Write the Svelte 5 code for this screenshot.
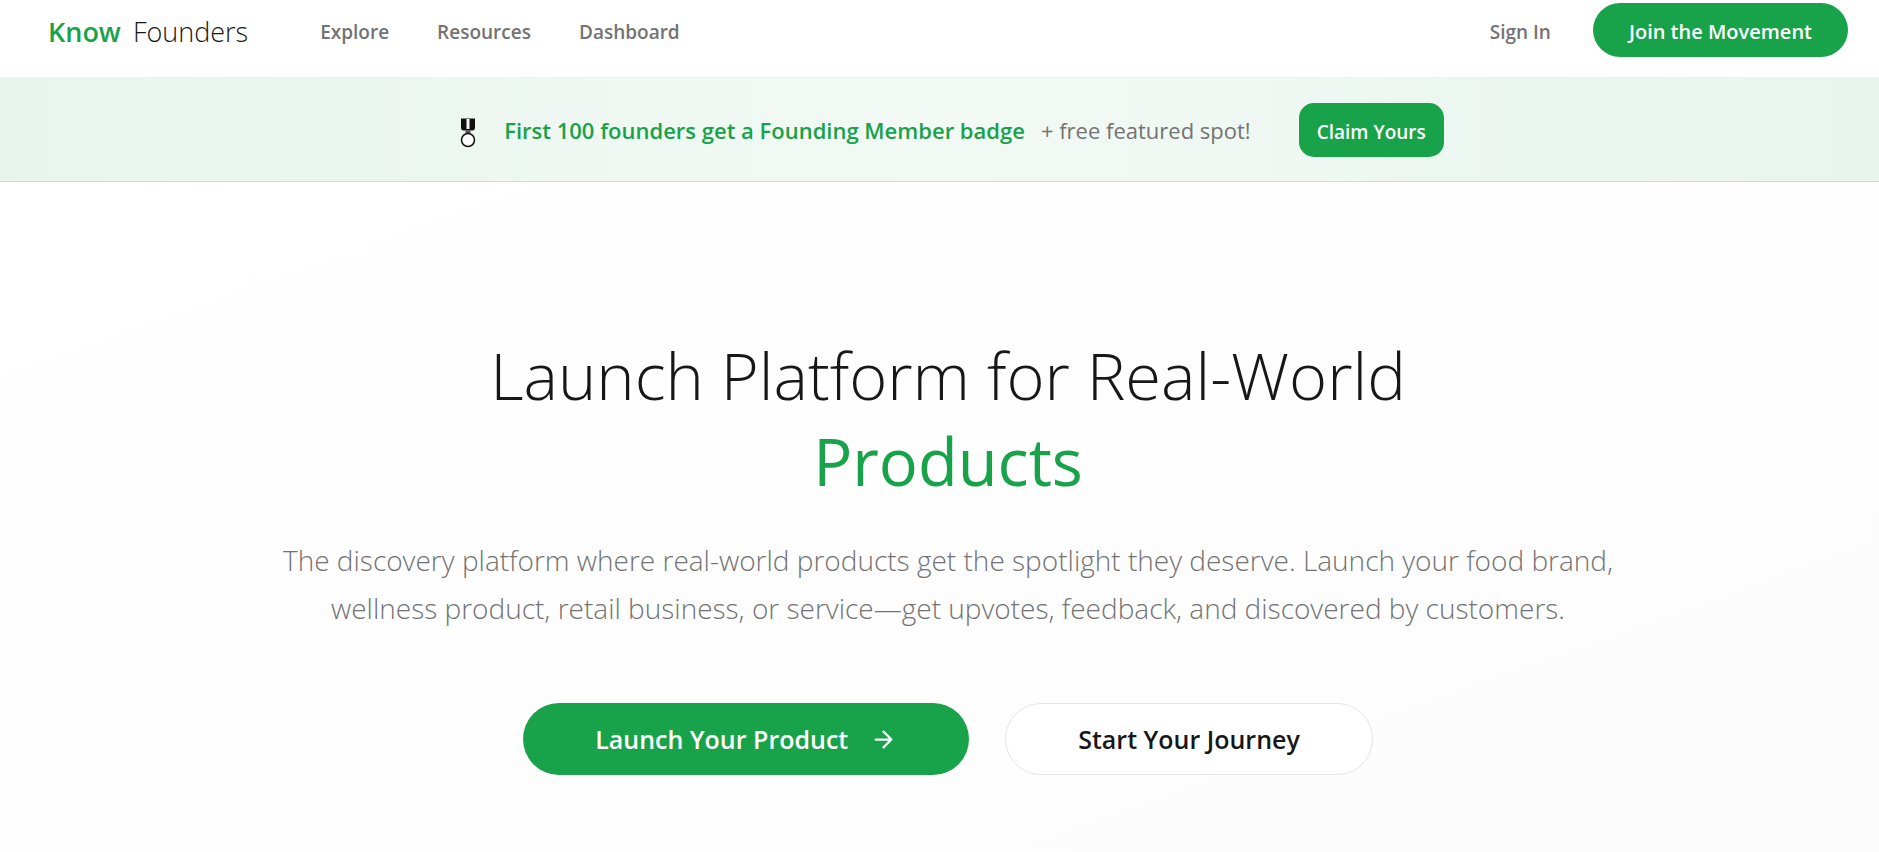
<script lang="ts">
  const links = [
    { label: 'Explore', href: '#explore' },
    { label: 'Resources', href: '#resources' },
    { label: 'Dashboard', href: '#dashboard' },
  ];
</script>

<div class="page">
  <header>
    <a class="logo" href="#home"><strong>Know</strong><span>Founders</span></a>
    <nav>
      {#each links as link}
        <a href={link.href}>{link.label}</a>
      {/each}
    </nav>
    <div class="account">
      <a href="#signin">Sign In</a>
      <button class="join">Join the Movement</button>
    </div>
  </header>

  <section class="banner">
    <svg class="medal" viewBox="0 -6 16 36" aria-hidden="true">
      <path d="M1 0.5h14v9.5q0 2-2 2.500H3q-2-0.500-2-2.500z" fill="#111" />
      <path d="M6.500 1h3v10h-3z" fill="#f3f9f5" />
      <path d="M5.500 12.500h5v2.500h-5z" fill="#555" />
      <circle cx="8" cy="22" r="6.500" fill="#fbfdfc" stroke="#111" stroke-width="1.500" />
    </svg>
    <p><strong>First 100 founders get a Founding Member badge</strong><span>+ free featured spot!</span></p>
    <button class="claim">Claim Yours</button>
  </section>

  <main>
    <h1>Launch Platform for Real-World<br /><em>Products</em></h1>
    <p class="lead">
      The discovery platform where real-world products get the spotlight they deserve. Launch your food brand,
      wellness product, retail business, or service—get upvotes, feedback, and discovered by customers.
    </p>
    <div class="actions">
      <button class="primary">
        Launch Your Product
        <svg viewBox="0 0 24 24" aria-hidden="true">
          <path d="M5 12h14M12 5l7 7-7 7" />
        </svg>
      </button>
      <button class="secondary">Start Your Journey</button>
    </div>
  </main>
</div>

<style>
  :global(body) {
    margin: 0;
    background: #fefefe;
  }

  .page {
    --green: #18a249;
    --ink: #171717;
    --grey: #737373;
    min-height: 100vh;
    display: flex;
    flex-direction: column;
    font-family: "Open Sans", "Noto Sans", sans-serif;
    color: var(--ink);
  }

  a {
    color: inherit;
    text-decoration: none;
  }

  button {
    box-sizing: border-box;
    font: inherit;
    font-weight: 600;
    border: 0;
    padding: 0;
    cursor: pointer;
    color: #fff;
    background: var(--green);
    white-space: nowrap;
  }

  header {
    display: flex;
    align-items: center;
    padding: 3px 31px 20px 48px;
    border-bottom: 1px solid #f0f2f1;
    background: #fff;
    font-size: 19px;
    font-weight: 600;
    color: var(--grey);
  }

  header a {
    padding-top: 3px;
  }

  .logo {
    display: flex;
    gap: 12px;
    font-size: 27px;
    line-height: 36px;
    font-weight: 300;
    color: var(--ink);
  }

  .logo strong {
    font-weight: 600;
    color: var(--green);
  }

  nav {
    display: flex;
    gap: 48px;
    margin-left: 72px;
  }

  .account {
    display: flex;
    align-items: center;
    gap: 42px;
    margin-left: auto;
  }

  .join {
    height: 54px;
    padding: 3px 36px 0;
    border-radius: 27px;
    font-size: 20px;
  }

  .banner {
    display: flex;
    align-items: center;
    justify-content: center;
    padding: 25px 31px 24px 56px;
    border-bottom: 1px solid #c5e3d0;
    background: linear-gradient(to right, #e7f5ec, #f3f9f5 50%, #e7f5ec);
  }

  .banner p {
    display: flex;
    gap: 16px;
    margin: 0 48px 0 28px;
    font-size: 22px;
    line-height: 36px;
    color: var(--grey);
  }

  .banner strong {
    font-weight: 600;
    color: var(--green);
  }

  .medal {
    width: 16px;
    height: 36px;
  }

  .claim {
    height: 54px;
    padding: 3px 18px 0;
    border-radius: 15px;
    font-size: 19px;
  }

  main {
    flex: 1;
    padding: 150px 31px 72px 48px;
    text-align: center;
    background: linear-gradient(to bottom right, #fff, #fcfcfc);
  }

  h1 {
    margin: 0;
    font-size: 65px;
    line-height: 86px;
    font-weight: 300;
  }

  h1 em {
    font-style: normal;
    font-weight: 400;
    color: var(--green);
  }

  .lead {
    max-width: 1344px;
    margin: 32px auto 0;
    font-size: 28px;
    line-height: 48px;
    font-weight: 300;
    color: var(--grey);
  }

  .actions {
    display: flex;
    justify-content: center;
    gap: 36px;
    margin-top: 71px;
  }

  .actions button {
    display: flex;
    align-items: center;
    gap: 22px;
    height: 72px;
    padding: 0 72px;
    border-radius: 36px;
    font-size: 25px;
  }

  .actions svg {
    width: 27px;
    height: 27px;
    fill: none;
    stroke: currentColor;
    stroke-width: 2;
    stroke-linecap: round;
    stroke-linejoin: round;
  }

  .actions .secondary {
    border: 1px solid #e5e5e5;
    background: #fff;
    color: var(--ink);
  }
</style>
